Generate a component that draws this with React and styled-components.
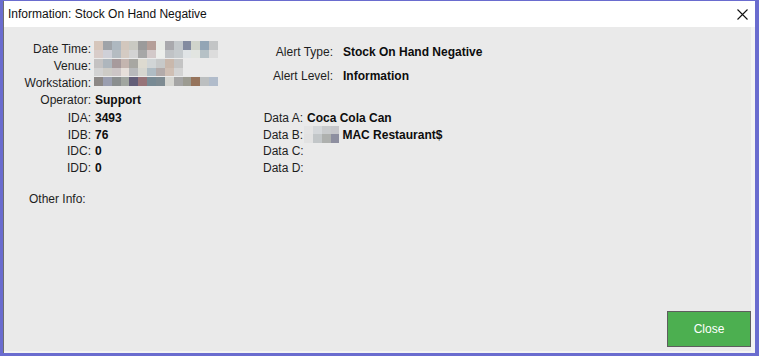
import styled, { createGlobalStyle } from "styled-components";

const GlobalStyle = createGlobalStyle`
  html, body {
    margin: 0;
    padding: 0;
    background: #6a6ccf;
  }
  body {
    font-family: "Liberation Sans", Arial, sans-serif;
    font-size: 12px;
    color: #1b1b1b;
  }
`;

const Frame = styled.div`
  width: 759px;
  height: 356px;
  box-sizing: border-box;
  padding: 1px 4px 3px 3px;
  background: #6a6ccf;
  display: flex;
`;

const Window = styled.div`
  flex: 1;
  display: flex;
  flex-direction: column;
  border-left: 1px solid #6e6e6e;
  background: #eaeaea;
`;

const TitleBar = styled.div`
  height: 26px;
  flex-shrink: 0;
  background: #ffffff;
  display: flex;
  align-items: center;
  justify-content: space-between;
  padding: 0 7px 0 4px;
`;

const Title = styled.span`
  color: #111;
  font-size: 12px;
`;

const Body = styled.div`
  flex: 1;
  display: flex;
  flex-direction: column;
  border-right: 4px solid #f3f3f3;
  border-bottom: 2px solid #f3f3f3;
`;

const TopSection = styled.div`
  display: flex;
  padding: 14px 0 0 20px;
`;

const LeftGrid = styled.div`
  width: 230px;
  display: grid;
  grid-template-columns: 67px 1fr;
  grid-auto-rows: 17px;
  column-gap: 4px;
`;

const RightGrid = styled.div`
  display: grid;
  grid-template-columns: 79px 1fr;
  grid-auto-rows: 17px;
  column-gap: 10px;
  row-gap: 7px;
  padding-top: 3px;
`;

const Label = styled.span`
  text-align: right;
  white-space: nowrap;
  line-height: 17px;
  color: #1e1e1e;
`;

const Value = styled.span`
  font-weight: bold;
  white-space: nowrap;
  line-height: 17px;
  color: #0d0d0d;
  display: flex;
  align-items: flex-start;
`;

const IdGrid = styled.div`
  display: grid;
  grid-template-columns: 67px 164px 40px 1fr;
  grid-auto-rows: 16.5px;
  column-gap: 4px;
  padding: 1px 0 0 20px;
  ${Label}, ${Value} {
    line-height: 16.5px;
  }
`;

const OtherInfo = styled.div`
  margin: 15px 0 0 25px;
  line-height: 16px;
  color: #1e1e1e;
`;

const Footer = styled.div`
  margin-top: auto;
  display: flex;
  justify-content: flex-end;
  padding-bottom: 4px;
`;

const CloseButton = styled.button`
  width: 84px;
  height: 36px;
  box-sizing: border-box;
  background: #4caf50;
  border: 1px solid #5e5e5e;
  color: #ffffff;
  font-family: "Liberation Sans", Arial, sans-serif;
  font-size: 12px;
  cursor: pointer;
`;

const Mosaic = styled.div`
  display: grid;
  grid-template-columns: repeat(${(p) => p.$cols}, 8.86px);
  grid-auto-rows: 8.7px;
  margin-top: ${(p) => p.$top}px;
  margin-left: ${(p) => p.$left || 0}px;
  margin-right: ${(p) => p.$right || 0}px;
`;

const Cell = styled.div`
  background: ${(p) => p.$c};
`;

const CloseIcon = () => (
  <svg width="11" height="11" viewBox="0 0 11 11">
    <path d="M0.5 0.5 L10.5 10.5 M10.5 0.5 L0.5 10.5" stroke="#111" strokeWidth="1.1" />
  </svg>
);

const Pixels = ({ rows, top, left, right }) => (
  <Mosaic $cols={rows[0].length} $top={top} $left={left} $right={right}>
    {rows.flat().map((c, i) => (
      <Cell key={i} $c={c ? `#${c}` : "transparent"} />
    ))}
  </Mosaic>
);

const dateTime = [
  ["d6c6bb", "9fa3a8", "aeb8c0", "d2c7bd", "c9c9c2", "9b9b9b", "b59f98", "e8ebe6", "a9a9ad", "c3c8cb", "838ba0", "d0d4cb", "93a5b5", "c3c5c6"],
  ["d8ccc9", "cfd0d8", "b5bcc2", "d4cbc3", "d3d3d3", "a7a7a7", "d3c9c9", "eceeeb", "c0c3c6", "c6cbce", "e0e4e6", "e2e5e1", "b6c1c6", "dcdcdc"],
];

const venue = [
  ["c4c2c2", "aeb6bd", "a79a9c", "c4b5af", "a8a7a2", "dddad0", "d1d5d6", "c7c9c9", "c9b8ac", "c4c4c4"],
  ["d2d2d2", "cdcbc6", "ccc5c6", "e6dfda", "b8b9bb", "d6d6d0", "afbcc4", "b3abaa", "cfbfb4", "d3d3d3"],
];

const workstation = [
  ["8c8886", "9a9eb0", "8a8e8f", "a1a6a0", "635e78", "977479", "788a94", "7e8b92", "d6d6d1", "a5a5a5", "9c9b91", "96745c", "bcbfc0", "b1bccb"],
];

const dataB = [
  ["e4e4e4", "d4d7da", "c8cacc", "c6c6ca"],
  ["e2e2e2", "c2c6c8", "aeb0ae", "8e8fa0"],
];

export default function App() {
  return (
    <>
      <GlobalStyle />
      <Frame>
        <Window>
          <TitleBar>
            <Title>Information: Stock On Hand Negative</Title>
            <CloseIcon />
          </TitleBar>
          <Body>
            <TopSection>
              <LeftGrid>
                <Label>Date Time:</Label>
                <Value>
                  <Pixels rows={dateTime} top={0} left={-1} />
                </Value>
                <Label>Venue:</Label>
                <Value>
                  <Pixels rows={venue} top={1} left={-1} />
                </Value>
                <Label>Workstation:</Label>
                <Value>
                  <Pixels rows={workstation} top={2} left={-1} />
                </Value>
                <Label>Operator:</Label>
                <Value>Support</Value>
              </LeftGrid>
              <RightGrid>
                <Label>Alert Type:</Label>
                <Value>Stock On Hand Negative</Value>
                <Label>Alert Level:</Label>
                <Value>Information</Value>
              </RightGrid>
            </TopSection>
            <IdGrid>
              <Label>IDA:</Label>
              <Value>3493</Value>
              <Label>Data A:</Label>
              <Value>Coca Cola Can</Value>
              <Label>IDB:</Label>
              <Value>76</Value>
              <Label>Data B:</Label>
              <Value>
                <Pixels rows={dataB} top={-1} left={-3} right={3} />
                MAC Restaurant$
              </Value>
              <Label>IDC:</Label>
              <Value>0</Value>
              <Label>Data C:</Label>
              <Value />
              <Label>IDD:</Label>
              <Value>0</Value>
              <Label>Data D:</Label>
              <Value />
            </IdGrid>
            <OtherInfo>Other Info:</OtherInfo>
            <Footer>
              <CloseButton>Close</CloseButton>
            </Footer>
          </Body>
        </Window>
      </Frame>
    </>
  );
}
